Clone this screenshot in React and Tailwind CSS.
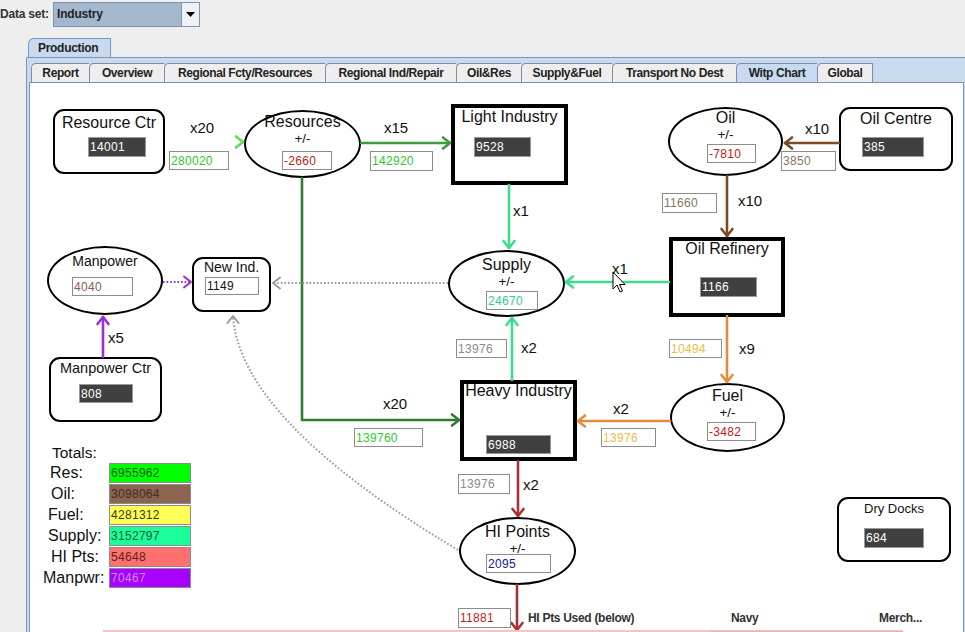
import React from 'react'

// canvas origin in page pixels (the white chart area)
const OX = 30
const OY = 83

const shapeCls = {
  round: 'border-2 border-black rounded-[11px]',
  thick: 'border-4 border-black',
  oval: 'border-2 border-black rounded-[50%]',
}

const T16 = 'text-[16px] h-[14px] leading-[14px]'
const T14 = 'text-[14px] h-[14px] leading-[14px]'
const PM = 'text-[13.5px] h-[12px] leading-[12px]'

const nodes = [
  { shape: 'round', x: 53, y: 109, w: 112, h: 65, lines: [{ t: 'Resource Ctr', cy: 123, c: T16 }] },
  { shape: 'oval', x: 244, y: 110, w: 117, h: 68, lines: [{ t: 'Resources', cy: 122, c: T16 }, { t: '+/-', cy: 139, c: PM }] },
  { shape: 'thick', x: 451, y: 104, w: 117, h: 81, lines: [{ t: 'Light Industry', cy: 117, c: T16 }] },
  { shape: 'oval', x: 668, y: 107, w: 115, h: 69, lines: [{ t: 'Oil', cy: 118, c: T16 }, { t: '+/-', cy: 135, c: PM }] },
  { shape: 'round', x: 839, y: 107, w: 114, h: 64, lines: [{ t: 'Oil Centre', cy: 119, c: T16 }] },
  { shape: 'thick', x: 669, y: 237, w: 116, h: 80, lines: [{ t: 'Oil Refinery', cy: 249, c: T16 }] },
  { shape: 'oval', x: 448, y: 250, w: 117, h: 67, lines: [{ t: 'Supply', cy: 265, c: T16 }, { t: '+/-', cy: 282, c: PM }] },
  { shape: 'oval', x: 47, y: 246, w: 116, h: 69, lines: [{ t: 'Manpower', cy: 261, c: T14 }] },
  { shape: 'round', x: 192, y: 257, w: 79, h: 55, lines: [{ t: 'New Ind.', cy: 267, c: T14 }] },
  { shape: 'round', x: 49, y: 357, w: 113, h: 65, lines: [{ t: 'Manpower Ctr', cy: 368, c: 'text-[14.5px] h-[14px] leading-[14px]' }] },
  { shape: 'thick', x: 460, y: 380, w: 117, h: 81, lines: [{ t: 'Heavy Industry', cy: 391, c: T16 }] },
  { shape: 'oval', x: 670, y: 383, w: 115, h: 69, lines: [{ t: 'Fuel', cy: 396, c: T16 }, { t: '+/-', cy: 413, c: PM }] },
  { shape: 'oval', x: 459, y: 517, w: 117, h: 68, lines: [{ t: 'HI Points', cy: 532, c: T16 }, { t: '+/-', cy: 549, c: PM }] },
  { shape: 'round', x: 837, y: 497, w: 114, h: 65, lines: [{ t: 'Dry Docks', cy: 509, c: 'text-[13px] h-[14px] leading-[14px]' }] },
]

const fieldCls = {
  dark: 'bg-[#404040] text-white border-[#9a9a9a]',
  green: 'bg-white text-[#2fc62f] border-[#8c8c8c]',
  red: 'bg-white text-[#c01818] border-[#8c8c8c]',
  brown: 'bg-white text-[#8a7560] border-[#8c8c8c]',
  teal: 'bg-white text-[#2ccf95] border-[#8c8c8c]',
  mauve: 'bg-white text-[#8a5a5a] border-[#8c8c8c]',
  black: 'bg-white text-[#111111] border-[#8c8c8c]',
  gray: 'bg-white text-[#8a8a8a] border-[#8c8c8c]',
  orange: 'bg-white text-[#efbb4a] border-[#8c8c8c]',
  navy: 'bg-white text-[#1a1a8c] border-[#8c8c8c]',
}

const fields = [
  { v: '14001', x: 88, y: 137, w: 58, h: 20, k: 'dark' },
  { v: '9528', x: 474, y: 137, w: 57, h: 20, k: 'dark' },
  { v: '385', x: 862, y: 137, w: 62, h: 20, k: 'dark' },
  { v: '1166', x: 700, y: 277, w: 57, h: 20, k: 'dark' },
  { v: '808', x: 79, y: 384, w: 54, h: 19, k: 'dark' },
  { v: '6988', x: 486, y: 435, w: 65, h: 19, k: 'dark' },
  { v: '684', x: 864, y: 528, w: 60, h: 20, k: 'dark' },
  { v: '280020', x: 169, y: 151, w: 60, h: 19, k: 'green' },
  { v: '-2660', x: 282, y: 151, w: 50, h: 19, k: 'red' },
  { v: '142920', x: 370, y: 151, w: 63, h: 20, k: 'green' },
  { v: '-7810', x: 707, y: 144, w: 49, h: 19, k: 'red' },
  { v: '3850', x: 781, y: 151, w: 55, h: 20, k: 'brown' },
  { v: '11660', x: 662, y: 193, w: 55, h: 20, k: 'brown' },
  { v: '24670', x: 486, y: 291, w: 52, h: 19, k: 'teal' },
  { v: '4040', x: 72, y: 277, w: 61, h: 19, k: 'mauve' },
  { v: '1149', x: 205, y: 277, w: 54, h: 18, k: 'black' },
  { v: '13976', x: 456, y: 339, w: 51, h: 19, k: 'gray' },
  { v: '10494', x: 669, y: 339, w: 53, h: 19, k: 'orange' },
  { v: '139760', x: 354, y: 428, w: 69, h: 19, k: 'green' },
  { v: '13976', x: 601, y: 428, w: 55, h: 19, k: 'orange' },
  { v: '-3482', x: 707, y: 422, w: 49, h: 19, k: 'red' },
  { v: '13976', x: 458, y: 474, w: 52, h: 20, k: 'gray' },
  { v: '2095', x: 486, y: 554, w: 65, h: 19, k: 'navy' },
  { v: '11881', x: 458, y: 608, w: 53, h: 20, k: 'red' },
]

const labels = [
  { t: 'x20', cx: 202, cy: 128 },
  { t: 'x15', cx: 396, cy: 128 },
  { t: 'x1', cx: 521, cy: 211 },
  { t: 'x10', cx: 817, cy: 129 },
  { t: 'x10', cx: 750, cy: 201 },
  { t: 'x1', cx: 620, cy: 269 },
  { t: 'x5', cx: 116, cy: 338 },
  { t: 'x20', cx: 395, cy: 404 },
  { t: 'x2', cx: 529, cy: 348 },
  { t: 'x9', cx: 747, cy: 349 },
  { t: 'x2', cx: 621, cy: 409 },
  { t: 'x2', cx: 531, cy: 485 },
]

const TEAL = '#3ddc8f'
const BROWN = '#7b4b26'
const ORANGE = '#e38b3e'
const DRED = '#a33434'
const PURPLE = '#9b30d0'
const GRAY = '#9a9a9a'

const arrows = [
  { d: 'M165 142 H243', c: 'url(#g1)', hc: '#66d85c', head: [243, 142, 'r'] },
  { d: 'M361 143 H450', c: '#3d9b3d', head: [450, 143, 'r'] },
  { d: 'M302 178 V420 H459', c: '#2f7c2f', head: [459, 420, 'r'] },
  { d: 'M509 185 V248', c: TEAL, head: [509, 248, 'd'] },
  { d: 'M839 143 H785', c: BROWN, head: [785, 143, 'l'] },
  { d: 'M727 176 V236', c: BROWN, head: [727, 236, 'd'] },
  { d: 'M669 282 H566', c: TEAL, head: [566, 282, 'l'] },
  { d: 'M448 283 H273', c: GRAY, dash: true, head: [273, 283, 'l'] },
  { d: 'M163 282 H191', c: PURPLE, dash: true, head: [191, 282, 'r'] },
  { d: 'M103 357 V317', c: PURPLE, head: [103, 317, 'u'] },
  { d: 'M512 380 V318', c: TEAL, head: [512, 318, 'u'] },
  { d: 'M727 316 V382', c: ORANGE, head: [727, 382, 'd'] },
  { d: 'M670 421 H578', c: ORANGE, head: [578, 421, 'l'] },
  { d: 'M518 461 V516', c: DRED, head: [518, 516, 'd'] },
  { d: 'M517 585 V632', c: DRED, head: [517, 630, 'd'] },
  { d: 'M458 550 Q240 420 233 316', c: GRAY, dash: true, head: [233, 316, 'u'] },
]

const totals = [
  { t: 'Res:', v: '6955962', pl: 'pl-[7px]', c: 'bg-[#00ff00] text-[#1d5a1d]' },
  { t: 'Oil:', v: '3098064', pl: 'pl-[8px]', c: 'bg-[#8c6450] text-[#3a2e28]' },
  { t: 'Fuel:', v: '4281312', pl: 'pl-[5px]', c: 'bg-[#ffff55] text-[#3a3a1a]' },
  { t: 'Supply:', v: '3152797', pl: 'pl-[5px]', c: 'bg-[#1aff99] text-[#1a5a3c]' },
  { t: 'HI Pts:', v: '54648', pl: 'pl-[8px]', c: 'bg-[#ff7070] text-[#5a2424]' },
  { t: 'Manpwr:', v: '70467', pl: 'pl-0', c: 'bg-[#aa00ff] text-[#c98af5]' },
]

const tabs = [
  { t: 'Report', w: 'w-[58px]' },
  { t: 'Overview', w: 'w-[75px]' },
  { t: 'Regional Fcty/Resources', w: 'w-[161px]' },
  { t: 'Regional Ind/Repair', w: 'w-[131px]' },
  { t: 'Oil&Res', w: 'w-[65px]' },
  { t: 'Supply&Fuel', w: 'w-[91px]' },
  { t: 'Transport No Dest', w: 'w-[124px]' },
  { t: 'Witp Chart', w: 'w-[81px]', on: true },
  { t: 'Global', w: 'w-[56px]', last: true },
]

function headPts(x, y, d) {
  const s = 7
  const k = 5.5
  if (d === 'r') return `${x - s},${y - k} ${x},${y} ${x - s},${y + k}`
  if (d === 'l') return `${x + s},${y - k} ${x},${y} ${x + s},${y + k}`
  if (d === 'd') return `${x - k},${y - s} ${x},${y} ${x + k},${y - s}`
  return `${x - k},${y + s} ${x},${y} ${x + k},${y + s}`
}

function Arrows() {
  return (
    <svg className="absolute left-0 top-0" width="933" height="549" viewBox="30 83 933 549">
      <defs>
        <linearGradient id="g1" x1="0" x2="1" y1="0" y2="0">
          <stop offset="0" stopColor="#d8f5d0" />
          <stop offset="1" stopColor="#66d85c" />
        </linearGradient>
      </defs>
      {arrows.map((a, i) => (
        <g key={i} fill="none" strokeLinecap="round" strokeLinejoin="round">
          <path d={a.d} stroke={a.c} strokeWidth={a.dash ? 2 : 2.6} strokeDasharray={a.dash ? '1.6 2' : undefined} strokeLinecap={a.dash ? 'butt' : 'round'} />
          <polyline points={headPts(...a.head)} stroke={a.hc || a.c} strokeWidth={a.dash ? 2 : 2.6} />
        </g>
      ))}
      <line x1="103" y1="631" x2="903" y2="631" stroke="#f5c4c4" strokeWidth="2" />
      <line x1="710" y1="631.5" x2="903" y2="631.5" stroke="#e6b4b4" strokeWidth="1" />
      {/* mouse pointer */}
      <path d="M613 272 V289 L617 285 L620 292 L622.5 291 L619.5 284.5 H625 Z" fill="#fff" stroke="#000" strokeWidth="1" strokeLinejoin="round" />
    </svg>
  )
}

function Field({ f }) {
  return (
    <div
      className={`absolute flex items-center border pl-[1px] text-[12px] leading-none tracking-[0.3px] ${fieldCls[f.k]}`}
      style={{ left: f.x - OX, top: f.y - OY, width: f.w, height: f.h }}
    >
      {f.v}
    </div>
  )
}

function Chart() {
  return (
    <div className="relative flex-1 mr-[1px] border-t border-l border-r border-[#7f93b5] bg-white overflow-hidden text-[#111111]">
      {nodes.map((n, i) => (
        <div key={i} className={`absolute bg-white ${shapeCls[n.shape]}`} style={{ left: n.x - OX, top: n.y - OY, width: n.w, height: n.h }} />
      ))}
      <Arrows />
      {nodes.map((n, i) =>
        n.lines.map((l, j) => (
          <div key={i + '-' + j} className={`absolute text-center whitespace-nowrap ${l.c}`} style={{ left: n.x - OX, width: n.w, top: l.cy - OY - (l.t === '+/-' ? 6 : 7) }}>
            {l.t}
          </div>
        ))
      )}
      {fields.map((f, i) => (
        <Field key={i} f={f} />
      ))}
      {labels.map((l, i) => (
        <div key={i} className="absolute w-[40px] h-[18px] leading-[18px] text-center text-[15px]" style={{ left: l.cx - OX - 20, top: l.cy - OY - 9 }}>
          {l.t}
        </div>
      ))}

      {/* totals block */}
      <div className="absolute left-[13px] top-[360px] flex flex-col">
        <div className="h-[19px] leading-[19px] pl-[9px] text-[15.5px]">Totals:</div>
        {totals.map((r) => (
          <div key={r.t} className="flex h-[21px] items-center">
            <div className={`w-[66px] text-[16px] leading-none ${r.pl}`}>{r.t}</div>
            <div className={`w-[82px] h-[20px] flex items-center border border-[#8c8c8c] pl-[1px] text-[12px] leading-none tracking-[0.3px] ${r.c}`}>{r.v}</div>
          </div>
        ))}
      </div>

      <div className="absolute left-[498px] top-[527px] h-[16px] leading-[16px] text-[12px] font-bold text-[#333333] tracking-[-0.3px]">HI Pts Used (below)</div>
      <div className="absolute left-[701px] top-[527px] h-[16px] leading-[16px] text-[12px] font-bold text-[#333333] tracking-[-0.3px]">Navy</div>
      <div className="absolute left-[849px] top-[527px] h-[16px] leading-[16px] text-[12px] font-bold text-[#333333] tracking-[-0.3px]">Merch...</div>
    </div>
  )
}

export default function App() {
  return (
    <div className="w-[965px] h-[632px] overflow-hidden bg-[#eeeeee] flex flex-col font-['Liberation_Sans',Arial,sans-serif]">
      {/* data set row */}
      <div className="h-[28px] flex items-center shrink-0">
        <span className="w-[53px] text-[12px] font-bold text-[#333333] tracking-[-0.2px]">Data set:</span>
        <div className="w-[147px] h-[25px] flex border border-[#7f93b5] bg-[#a3b8cc]">
          <div className="flex-1 flex items-center pl-[3px] text-[12px] font-bold text-[#222222] tracking-[-0.2px]">Industry</div>
          <div className="w-[18px] flex items-center justify-center border-l border-[#7f93b5] bg-[#eef2f8]">
            <svg width="9" height="5" viewBox="0 0 9 5"><polygon points="0,0 9,0 4.5,5" fill="#000" /></svg>
          </div>
        </div>
      </div>

      {/* outer tab */}
      <div className="mt-[10px] pl-[28px] flex shrink-0">
        <div className="w-[83px] h-[19px] flex items-center pl-[9px] border-t border-l border-r border-[#7f93b5] rounded-tl-[6px] bg-[#c8daf0] text-[12px] font-bold text-[#222222] tracking-[-0.3px]">
          Production
        </div>
      </div>

      {/* outer panel */}
      <div className="ml-[26px] flex-1 flex flex-col border-t border-l border-[#7f93b5] bg-[#c8daf0] pt-[5px] pl-[2px]">
        <div className="flex pl-[2px] h-[19px] shrink-0">
          {tabs.map((t) => (
            <div
              key={t.t}
              className={`${t.w} h-[19px] flex items-center justify-center border-t border-l border-[#7d8ba3] rounded-tl-[5px] text-[12px] font-bold text-[#222222] tracking-[-0.4px] whitespace-nowrap ${t.on ? 'bg-[#c8daf0]' : 'bg-[#eeeeee]'} ${t.last ? 'border-r' : ''}`}
            >
              {t.t}
            </div>
          ))}
        </div>
        <Chart />
      </div>
    </div>
  )
}
